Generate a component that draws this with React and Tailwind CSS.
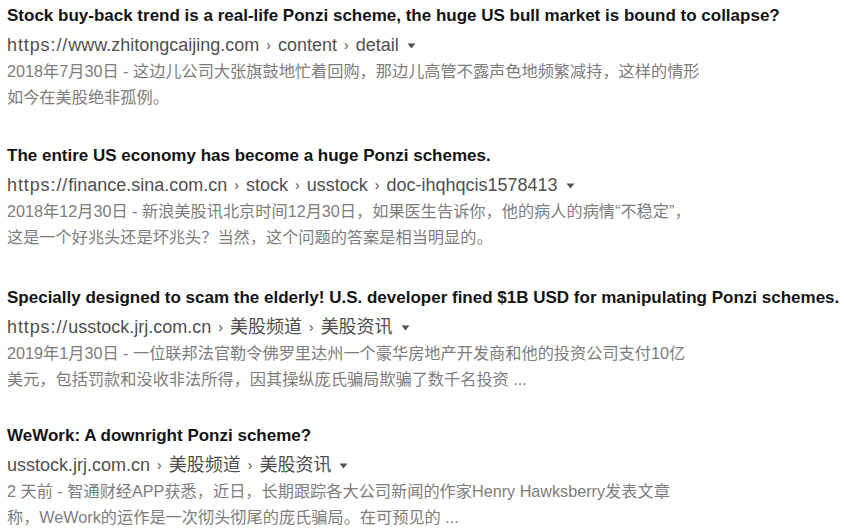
const results = [
  {
    title: "Stock buy-back trend is a real-life Ponzi scheme, the huge US bull market is bound to collapse?",
    url: ["https://", "www.zhitongcaijing.com", "content", "detail"],
    lines: [
      "2018年7月30日 - 这边儿公司大张旗鼓地忙着回购，那边儿高管不露声色地频繁减持，这样的情形",
      "如今在美股绝非孤例。",
    ],
    gap: "mt-0",
  },
  {
    title: "The entire US economy has become a huge Ponzi schemes.",
    url: ["https://", "finance.sina.com.cn", "stock", "usstock", "doc-ihqhqcis1578413"],
    lines: [
      "2018年12月30日 - 新浪美股讯北京时间12月30日，如果医生告诉你，他的病人的病情“不稳定”，",
      "这是一个好兆头还是坏兆头？当然，这个问题的答案是相当明显的。",
    ],
    gap: "mt-[36px]",
  },
  {
    title: "Specially designed to scam the elderly! U.S. developer fined $1B USD for manipulating Ponzi schemes.",
    url: ["https://", "usstock.jrj.com.cn", "美股频道", "美股资讯"],
    lines: [
      "2019年1月30日 - 一位联邦法官勒令佛罗里达州一个豪华房地产开发商和他的投资公司支付10亿",
      "美元，包括罚款和没收非法所得，因其操纵庞氏骗局欺骗了数千名投资 ...",
    ],
    gap: "mt-[38px]",
  },
  {
    title: "WeWork: A downright Ponzi scheme?",
    url: ["", "usstock.jrj.com.cn", "美股频道", "美股资讯"],
    lines: [
      "2 天前 - 智通财经APP获悉，近日，长期跟踪各大公司新闻的作家Henry Hawksberry发表文章",
      "称，WeWork的运作是一次彻头彻尾的庞氏骗局。在可预见的 ...",
    ],
    gap: "mt-[34px]",
  },
];

const Caret = () => (
  <svg width="9" height="6" viewBox="0 0 9 6" className="ml-[8px] mt-[2px] shrink-0">
    <path d="M0.5 0.5h8L4.5 5.5z" fill="#555" />
  </svg>
);

const Result = ({ title, url, lines, gap }) => {
  const [scheme, host, ...path] = url;
  return (
    <div className={`flex flex-col ${gap}`}>
      <h3 className="text-[17px] leading-[20px] font-bold text-[#141414] whitespace-nowrap">{title}</h3>
      <div className="mt-[9px] flex items-center text-[18px] leading-[20px] text-[#4f4f4f] whitespace-nowrap">
        {scheme && <span className="tracking-[0.9px]">{scheme}</span>}
        <span>{host}</span>
        {path.map((part, i) => (
          <span key={i} className="flex items-center">
            <span className="mx-[7px] text-[14px]">›</span>
            {part}
          </span>
        ))}
        <Caret />
      </div>
      <div className="mt-[3px] text-[16.2px] leading-[26px] text-[#7d7d7d]">
        {lines.map((l, i) => (
          <p key={i} className="whitespace-nowrap">{l}</p>
        ))}
      </div>
    </div>
  );
};

export default function App() {
  return (
    <div
      className="w-[845px] h-[531px] bg-white overflow-hidden pl-[7px] pt-[6px] flex flex-col"
      style={{ fontFamily: '"Liberation Sans", Arial, "Noto Sans CJK SC", sans-serif' }}
    >
      {results.map((r, i) => (
        <Result key={i} {...r} />
      ))}
    </div>
  );
}
